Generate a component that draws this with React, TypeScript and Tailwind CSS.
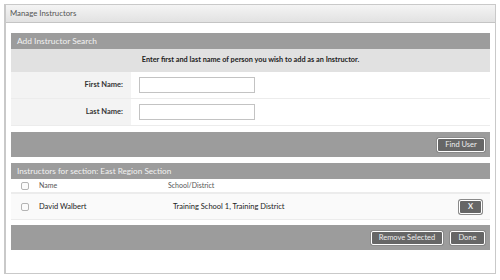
import React from 'react'

const font = { fontFamily: 'Lato, "Open Sans", sans-serif' }

function Btn({ label, className = '' }: { label: string; className?: string }) {
  return (
    <button
      className={`h-[14px] rounded-[2px] border border-white bg-[#666] text-[7.5px] leading-none text-[#eee] shadow-[0_0_0_1px_#8a8a8a] ${className}`}
    >
      {label}
    </button>
  )
}

function Check() {
  return <span className="block h-[8px] w-[8px] rounded-[2px] border border-[#b4b4b4] bg-[#fbfbfb]" />
}

export default function App() {
  const rows = [{ name: 'David Walbert', school: 'Training School 1, Training District' }]

  return (
    <div className="h-[280px] w-[500px] bg-white p-1" style={font}>
      <div className="flex h-[270px] flex-col border border-[#c9c9c9] border-l-2">
        {/* Title */}
        <div className="flex h-[18px] items-center border-b border-[#c4c4c4] bg-gradient-to-b from-[#f4f4f4] to-[#e2e2e2] px-1 text-[7.8px] text-[#555]">
          Manage Instructors
        </div>

        <div className="flex flex-col px-[5px] pt-[10px]">
          {/* Search section */}
          <div className="flex h-[16px] items-center bg-[#9c9c9c] px-[6px] text-[8.4px] text-[#f2f2f2]">
            Add Instructor Search
          </div>
          <div className="flex h-[23px] items-center justify-center bg-[#e1e1e1] text-[7.3px] font-bold text-[#222]">
            Enter first and last name of person you wish to add as an Instructor.
          </div>
          {['First Name:', 'Last Name:'].map(label => (
            <div key={label} className="flex h-[27px] border-b border-[#ececec]">
              <div className="flex w-[120px] items-center justify-end bg-[#f3f3f3] pr-[8px] text-[7.5px] font-bold text-[#333]">
                {label}
              </div>
              <div className="flex flex-1 items-center bg-white pl-[8px]">
                <input className="h-[16px] w-[116px] border border-[#c3c3c3] bg-white outline-none" />
              </div>
            </div>
          ))}
          <div className="mt-[6px] flex h-[25px] items-center justify-end bg-[#9c9c9c] pr-[5px]">
            <Btn label="Find User" className="w-[48px]" />
          </div>

          {/* Instructors list */}
          <div className="mt-[6px] flex h-[16px] items-center bg-[#9c9c9c] px-[6px] text-[8.2px] text-[#f2f2f2]">
            Instructors for section: East Region Section
          </div>
          <div className="flex h-[15px] items-center border-b-2 border-[#ececec] text-[7px] text-[#555]">
            <div className="flex w-[28px] justify-center"><Check /></div>
            <div className="w-[129px]">Name</div>
            <div>School/District</div>
          </div>
          {rows.map(r => (
            <div key={r.name} className="flex h-[26px] items-center border-b border-[#ececec] bg-[#fafafa] text-[7.5px] text-[#222]">
              <div className="flex w-[28px] justify-center"><Check /></div>
              <div className="w-[134px]">{r.name}</div>
              <div className="flex-1">{r.school}</div>
              <Btn label="X" className="mr-[8px] w-[23px] font-bold" />
            </div>
          ))}
          <div className="mt-[5px] flex h-[25px] items-center justify-end gap-[7px] bg-[#9c9c9c] pr-[5px]">
            <Btn label="Remove Selected" className="w-[72px]" />
            <Btn label="Done" className="w-[35px]" />
          </div>
        </div>
      </div>
    </div>
  )
}
